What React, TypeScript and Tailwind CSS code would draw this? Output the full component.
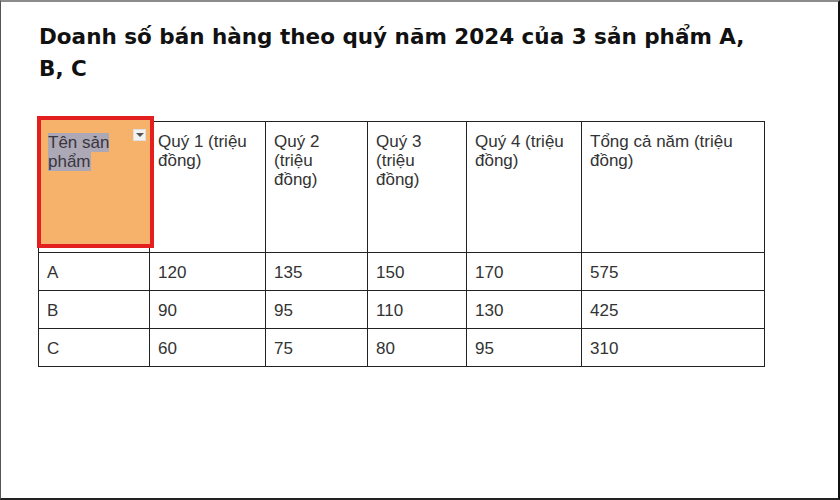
const header = [
  "Quý 1 (triệu đồng)",
  "Quý 2 (triệu đồng)",
  "Quý 3 (triệu đồng)",
  "Quý 4 (triệu đồng)",
  "Tổng cả năm (triệu đồng)",
];

const rows = [
  ["A", "120", "135", "150", "170", "575"],
  ["B", "90", "95", "110", "130", "425"],
  ["C", "60", "75", "80", "95", "310"],
];

const widths = ["w-[111px]", "w-[116px]", "w-[102px]", "w-[99px]", "w-[115px]", "w-[183px]"];

export default function App() {
  return (
    <div
      className="w-[840px] h-[500px] bg-white border-t-2 border-t-[#8c8c8c] border-l border-l-[#555] border-r-2 border-r-[#111] border-b-2 border-b-[#222] pl-[37px] pt-[19px]"
      style={{ fontFamily: '"Liberation Sans", Arial, sans-serif' }}
    >
      <h1
        className="w-[726px] pl-[1px] text-[21.5px] leading-[32px] font-bold text-[#111]"
        style={{ fontFamily: '"DejaVu Sans", "Liberation Sans", sans-serif' }}
      >
        Doanh số bán hàng theo quý năm 2024 của 3 sản phẩm A, B, C
      </h1>

      <div className="relative mt-[36px] w-[726px]">
        <table className="w-[726px] table-fixed border-collapse text-[17px] leading-[19px] text-[#333]">
          <colgroup>
            {widths.map((w, i) => (
              <col key={i} className={w} />
            ))}
          </colgroup>
          <thead>
            <tr className="h-[131px]">
              <th className="border border-[#222] align-top" />
              {header.map((h) => (
                <th
                  key={h}
                  className="border border-[#222] align-top text-left font-normal px-[8px] pt-[10px]"
                >
                  {h}
                </th>
              ))}
            </tr>
          </thead>
          <tbody>
            {rows.map((r) => (
              <tr key={r[0]} className="h-[38px]">
                {r.map((c, i) => (
                  <td key={i} className="border border-[#222] px-[8px] pt-[1px] align-middle">
                    {c}
                  </td>
                ))}
              </tr>
            ))}
          </tbody>
        </table>

        {/* selected header cell */}
        <div className="absolute left-[-1px] top-[-5px] w-[117px] h-[132px] border-4 border-[#e3201f] bg-[#f6b26b]">
          <div className="pl-[7px] pt-[13px] pr-[20px] text-[17px] leading-[19px] text-[#3a3540]">
            <span className="bg-[#aca8b5] box-decoration-clone">Tên sản</span>
            <br />
            <span className="bg-[#aca8b5] box-decoration-clone">phẩm</span>
          </div>
          <div className="absolute left-[92px] top-[9px] w-[13px] h-[12px] bg-[#f2f2f2] border border-[#e0e0e0] flex items-center justify-center">
            <div className="w-0 h-0 border-l-[4px] border-r-[4px] border-t-[4px] border-l-transparent border-r-transparent border-t-[#555]" />
          </div>
        </div>
      </div>
    </div>
  );
}
